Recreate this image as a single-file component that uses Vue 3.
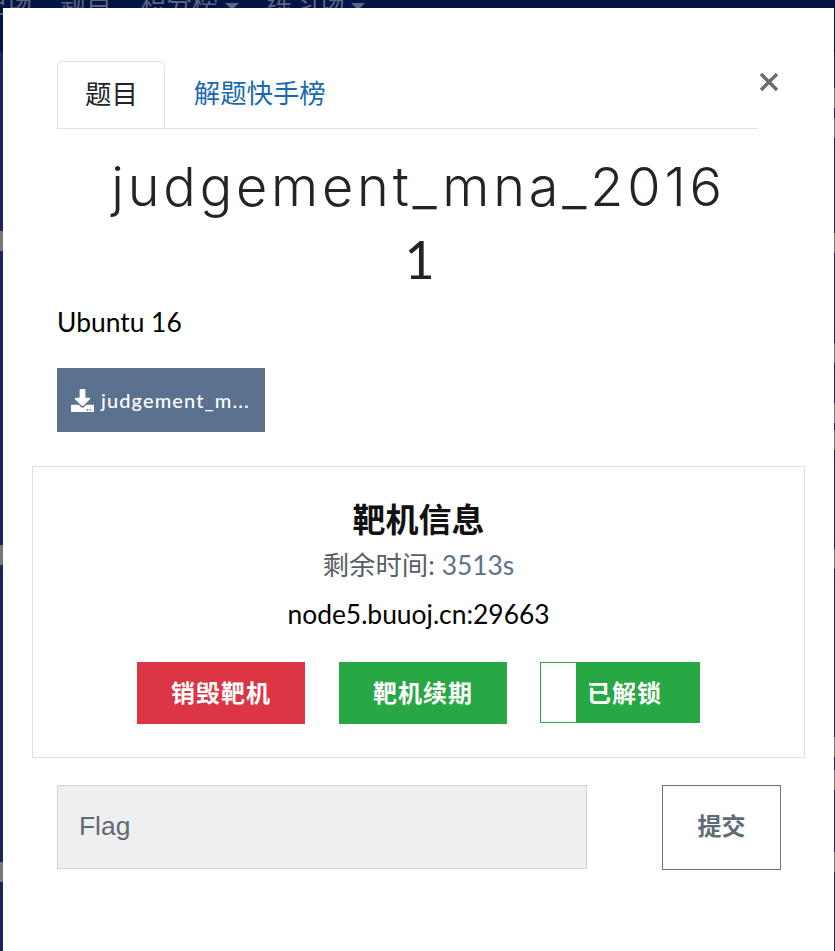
<template>
  <div class="page">
    <!-- Страница под модальным окном -->
    <nav class="topnav">
      <span class="nav-item">靶场</span>
      <span class="nav-item">题目</span>
      <span class="nav-item">积分榜 <i class="caret"></i></span>
      <span class="nav-item">练习场 <i class="caret"></i></span>
    </nav>
    <i v-for="y in leftShades" :key="'l' + y" class="edge-shade left" :style="{ top: y + 'px' }"></i>
    <i v-for="y in rightShades" :key="'r' + y" class="edge-shade right" :style="{ top: y + 'px' }"></i>

    <div class="modal">
      <button class="close" aria-label="Close">
        <svg width="20" height="20" viewBox="0 0 20 20">
          <path d="M2 2 L18 18 M18 2 L2 18" stroke="#6c6c6c" stroke-width="3.4" fill="none" />
        </svg>
      </button>

      <ul class="tabs">
        <li class="tab active">题目</li>
        <li class="tab">解题快手榜</li>
      </ul>

      <h1 class="title">judgement_mna_2016<br /><span class="title-end">1</span></h1>
      <p class="desc">Ubuntu 16</p>

      <a class="file-btn">
        <svg class="dl-icon" width="23" height="23" viewBox="0 0 512 512">
          <path fill="#fff" d="M216 0h80c13.300 0 24 10.700 24 24v168h87.700c17.800 0 26.700 21.500 14.100 34.100L269.700 378.300c-7.500 7.500-19.800 7.500-27.300 0L90.100 226.100c-12.600-12.600-3.700-34.100 14.100-34.100H192V24c0-13.300 10.700-24 24-24zm296 376v112c0 13.300-10.700 24-24 24H24c-13.300 0-24-10.700-24-24V376c0-13.300 10.700-24 24-24h146.700l49 49c20.100 20.100 52.500 20.100 72.600 0l49-49H488c13.300 0 24 10.700 24 24zm-124 88c0-11-9-20-20-20s-20 9-20 20 9 20 20 20 20-9 20-20zm64 0c0-11-9-20-20-20s-20 9-20 20 9 20 20 20 20-9 20-20z" />
        </svg>
        <span>judgement_m...</span>
      </a>

      <section class="instance">
        <h2 class="instance-title">靶机信息</h2>
        <div class="time"><span class="time-label">剩余时间:</span> {{ seconds }}s</div>
        <div class="addr">{{ address }}</div>
        <div class="actions">
          <button class="act red">销毁靶机</button>
          <button class="act green">靶机续期</button>
          <div class="unlock">
            <span class="knob"></span>
            <span class="unlock-text">已解锁</span>
          </div>
        </div>
      </section>

      <div class="flag-row">
        <div class="flag-input">Flag</div>
        <button class="submit">提交</button>
      </div>
    </div>
  </div>
</template>

<script setup>
import { ref } from 'vue';

const seconds = ref(3513);
const address = ref('node5.buuoj.cn:29663');
// Светлые полоски страницы, видимые по краям окна
const leftShades = [231, 545, 862];
const rightShades = [88, 118, 233, 343, 403, 430, 549, 737, 770, 852];
</script>

<style scoped>
.page {
  position: relative;
  height: 951px;
  overflow: hidden;
  background: #1b2560;
  font-family: Lato, "Noto Sans CJK SC", sans-serif;
}

.topnav {
  display: flex;
  gap: 28px;
  height: 52px;
  margin-left: -20px;
  background: #001446;
  color: #5b6680;
  font-size: 26px;
  line-height: 20px;
  white-space: nowrap;
}

.nav-item {
  margin-top: -7px;
}

.caret {
  display: inline-block;
  width: 0;
  height: 0;
  border-left: 7px solid transparent;
  border-right: 7px solid transparent;
  border-top: 7px solid #5b6680;
  vertical-align: middle;
}

.edge-shade {
  position: absolute;
  height: 20px;
  background: #77777a;
}

.edge-shade.left {
  left: 0;
  width: 3px;
}

.edge-shade.right {
  right: 0;
  width: 1px;
}

.modal {
  position: absolute;
  top: 8px;
  left: 3px;
  width: 831px;
  height: 943px;
  box-sizing: border-box;
  padding: 53px 54px 0;
  background: #fff;
}

.close {
  position: absolute;
  top: 64px;
  left: 756px;
  padding: 0;
  border: 0;
  background: none;
  line-height: 0;
}

.tabs {
  display: flex;
  width: 700px;
  height: 68px;
  box-sizing: border-box;
  margin: 0;
  padding: 0;
  list-style: none;
  border-bottom: 1px solid #dee2e6;
}

.tab {
  height: 67px;
  box-sizing: border-box;
  padding: 0 28.500px;
  font-size: 26.400px;
  line-height: 65px;
  color: #1b6ab0;
}

.tab.active {
  padding: 0 26.500px 0 27px;
  color: #212529;
  background: #fff;
  border: 1px solid #dee2e6;
  border-bottom: 0;
  border-radius: 6px 6px 0 0;
}

.title {
  margin: 20px 0 0;
  height: 150px;
  font-family: Inter, sans-serif;
  font-size: 54px;
  font-weight: 300;
  line-height: 75px;
  letter-spacing: 3.800px;
  text-align: center;
  color: #212529;
}

.title-end {
  padding-left: 6px;
  font-family: Lato, sans-serif;
  font-size: 52px;
  font-weight: 400;
  line-height: 1;
  vertical-align: 2px;
}

.desc {
  margin: 5px 0 0;
  font-size: 26.400px;
  line-height: 36px;
  color: #000;
}

.file-btn {
  display: flex;
  align-items: center;
  gap: 7px;
  width: 208px;
  height: 64px;
  box-sizing: border-box;
  margin-top: 28px;
  padding-left: 14px;
  background: #5a7190;
  color: #fff;
  font-size: 20px;
  font-weight: 500;
  letter-spacing: 1.100px;
}

.instance {
  width: 773px;
  height: 292px;
  box-sizing: border-box;
  margin: 34px 0 0 -25px;
  padding-top: 31px;
  border: 1px solid #dfdfdf;
  text-align: center;
}

.instance-title {
  margin: 0;
  font-size: 33px;
  font-weight: 700;
  line-height: 42px;
  color: #111;
}

.time {
  margin-top: 4px;
  font-size: 26.400px;
  line-height: 42px;
  color: #5f7186;
}

.time-label { color: #5a5f66; }

.addr {
  margin-top: 10px;
  font-size: 26.400px;
  line-height: 36px;
  color: #000;
}

.actions {
  display: flex;
  gap: 34px;
  margin: 30px 0 0 104px;
}

.act {
  width: 168px;
  height: 62px;
  padding: 0 0 3px;
  border: 0;
  font-family: inherit;
  font-size: 24px;
  font-weight: 700;
  letter-spacing: 1px;
  color: #fff;
}

.red { background: #dc3545; }
.green { background: #28a745; }

.unlock {
  display: flex;
  width: 160px;
  height: 61px;
  box-sizing: border-box;
  margin-left: -1px;
  background: #28a745;
  border: 1px solid #28a745;
}

.knob {
  width: 35px;
  background: #fff;
}

.unlock-text {
  padding-left: 11px;
  font-size: 24px;
  font-weight: 700;
  line-height: 59px;
  letter-spacing: 1px;
  color: #fff;
}

.flag-row {
  display: flex;
  justify-content: space-between;
  width: 724px;
  margin-top: 27px;
}

.flag-input {
  width: 530px;
  height: 84px;
  box-sizing: border-box;
  padding-left: 21px;
  background: #efefef;
  border: 1px solid #ced4da;
  font-family: "Liberation Sans", sans-serif;
  font-size: 26.400px;
  line-height: 80px;
  color: #5f6b75;
}

.submit {
  width: 119px;
  height: 85px;
  padding: 0 0 6px;
  background: #fff;
  border: 1px solid #6c757d;
  font-family: inherit;
  font-size: 24px;
  font-weight: 700;
  color: #5f6b75;
}
</style>
